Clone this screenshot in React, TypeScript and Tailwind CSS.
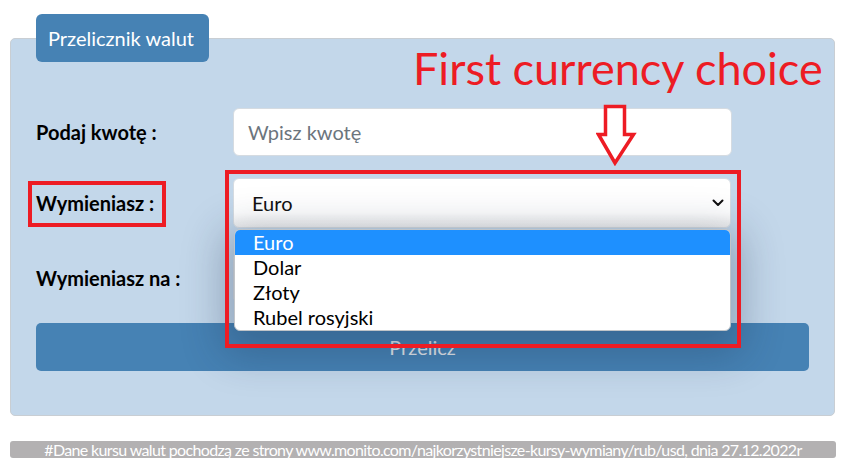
import React from 'react';

const options = ['Euro', 'Dolar', 'Złoty', 'Rubel rosyjski'];

function Chevron() {
  return (
    <svg width="12" height="8" viewBox="0 0 12 8" className="shrink-0">
      <path d="M1.5 1.5 L6 6 L10.5 1.5" fill="none" stroke="#111" strokeWidth="2" strokeLinecap="round" strokeLinejoin="round" />
    </svg>
  );
}

function FakeSelect({ value }: { value: string }) {
  return (
    <div className="h-[50px] w-[498px] rounded-[6px] bg-white bg-gradient-to-b from-white from-70% to-[#f0f0f0] border border-[#d5dbe1] flex items-center justify-between pl-[18px] pr-[6px] text-[20px] text-[#111]">
      <span>{value}</span>
      <Chevron />
    </div>
  );
}

export default function App() {
  return (
    <div className="relative w-[846px] h-[470px] bg-white overflow-hidden font-['Lato','Noto_Sans',sans-serif]">
      <div className="pt-[38px] px-[10px]">
        <div className="relative h-[378px] w-[825px] rounded-[5px] border border-[#c9ced3] bg-[#c3d7ea] pl-[25px] pt-[69px]">
          <div className="absolute -top-[25px] left-[25px] h-[48px] w-[173px] rounded-[6px] bg-[#4682b4] text-white text-[20px] flex items-center pl-[12px]">
            Przelicznik walut
          </div>

          <div className="grid grid-cols-[197px_499px] items-center gap-y-[22px]">
            <label className="text-[20px] font-bold text-black">Podaj kwotę :</label>
            <div className="h-[48px] rounded-[6px] bg-white border border-[#d5dbe1] flex items-center pl-[14px] text-[20px] text-[#6c757d]">
              Wpisz kwotę
            </div>

            <label className="text-[20px] font-bold text-black">Wymieniasz :</label>
            <FakeSelect value="Euro" />
          </div>

          <div className="grid grid-cols-[197px_499px] items-center mt-[25px]">
            <label className="text-[20px] font-bold text-black">Wymieniasz na :</label>
            {/* second select sits under the open list */}
            <FakeSelect value="" />
          </div>

          <button className="mt-[20px] h-[48px] w-[773px] rounded-[5px] bg-[#4682b4] text-[20px] text-[#e4e8ec]">
            Przelicz
          </button>
        </div>
      </div>

      <div className="mt-[25px] mx-[10px] h-[17px] rounded-[3px] bg-[#b3b1b2] flex items-center justify-center overflow-hidden">
        <span className="text-white text-[16px] leading-none tracking-[-0.65px] whitespace-nowrap">
          #Dane kursu walut pochodzą ze strony www.monito.com/najkorzystniejsze-kursy-wymiany/rub/usd, dnia 27.12.2022r
        </span>
      </div>

      {/* open dropdown list */}
      <div className="absolute left-[234px] top-[229px] w-[497px] rounded-[6px] bg-white overflow-hidden shadow-[0_12px_40px_12px_rgba(20,40,70,0.28)] border border-[#c0c4c8] text-[20px] leading-[25px] text-black">
        {options.map((o, i) => (
          <div key={o} className={i === 0 ? 'bg-[#1e90ff] text-white pl-[18px]' : 'pl-[18px]'}>
            {o}
          </div>
        ))}
      </div>

      {/* annotations */}
      <div className="absolute left-[413px] top-[46px] text-[45px] leading-none text-[#ed1c24] whitespace-nowrap">
        First currency choice
      </div>
      <svg className="absolute left-[596px] top-[104px]" width="42" height="62" viewBox="0 0 42 62">
        <path d="M9.5 2.5 H28.5 V30.5 H37.5 L19 59 L2.5 30.5 H9.5 Z" fill="white" stroke="#ed1c24" strokeWidth="3.5" strokeLinejoin="miter" />
      </svg>
      <div className="absolute left-[28px] top-[181px] w-[138px] h-[46px] border-4 border-[#ed1c24]" />
      <div className="absolute left-[225px] top-[170px] w-[516px] h-[178px] border-4 border-[#ed1c24]" />
    </div>
  );
}
